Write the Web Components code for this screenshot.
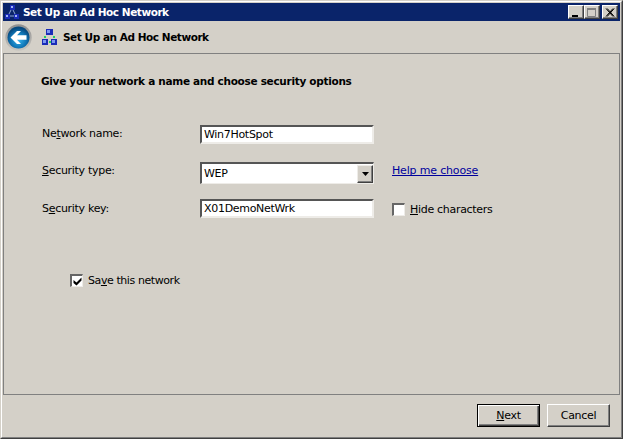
<!DOCTYPE html>
<html>
<head>
<meta charset="utf-8">
<title>Set Up an Ad Hoc Network</title>
<style>
  html,body{margin:0;padding:0;background:#d4d0c8;}
  body{width:623px;height:439px;overflow:hidden;font-family:"DejaVu Sans",sans-serif;font-size:11px;color:#000;}
  u{text-decoration-skip-ink:none;}
</style>
</head>
<body>
<template id="net-icon">
  <svg width="16" height="16" viewBox="0 0 16 16" style="display:block">
    <rect x="5" y="0" width="7" height="6" fill="#1a2cb8"/><rect x="6" y="1" width="3" height="3" fill="#7d97f0"/>
    <rect x="1" y="10" width="6" height="6" fill="#1a2cb8"/><rect x="2" y="11" width="3" height="3" fill="#7d97f0"/>
    <rect x="10" y="10" width="6" height="6" fill="#1a2cb8"/><rect x="11" y="11" width="3" height="3" fill="#7d97f0"/>
    <rect x="3" y="7" width="2" height="2" fill="#20d060"/><rect x="12" y="7" width="2" height="2" fill="#20d060"/>
    <rect x="8" y="12" width="2" height="2" fill="#20d060"/>
  </svg>
</template>

<a-window>
  <a-titlebar slot="title">Set Up an Ad Hoc Network</a-titlebar>
  <a-header slot="head">Set Up an Ad Hoc Network</a-header>
  <a-panel heading="Give your network a name and choose security options">
    <a-label><span>Ne<u>t</u>work name:</span></a-label>
    <a-input value="Win7HotSpot"></a-input>
    <span></span>

    <a-label><span><u>S</u>ecurity type:</span></a-label>
    <a-select value="WEP"></a-select>
    <a-link>Help me choose</a-link>

    <a-label low><span>S<u>e</u>curity key:</span></a-label>
    <a-input value="X01DemoNetWrk"></a-input>
    <a-check><span><u>H</u>ide characters</span></a-check>

    <a-check slot="save" checked><span>Sa<u>v</u>e this network</span></a-check>
  </a-panel>
  <a-footer slot="foot">
    <a-button default><span><u>N</u>ext</span></a-button>
    <a-button>Cancel</a-button>
  </a-footer>
</a-window>

<script>
  // window frame, everything else goes in its slots
  class aWindow extends HTMLElement {
    constructor() {
      super();
      let shadowRoot = this.attachShadow({mode: 'open'});
      shadowRoot.innerHTML = `
      <style>
        :host{
          display:flex;
          flex-direction:column;
          box-sizing:border-box;
          width:623px;
          height:439px;
          background:#d4d0c8;
          border-top:1px solid #d4d0c8;
          border-left:1px solid #d4d0c8;
          border-right:1px solid #404040;
          border-bottom:1px solid #404040;
          letter-spacing:-0.3px;
        }
        .inner{
          flex:1;
          display:flex;
          flex-direction:column;
          min-height:0;
          border-top:1px solid #fff;
          border-left:1px solid #fff;
          border-right:1px solid #808080;
          border-bottom:1px solid #808080;
          padding:1px;
        }
      </style>
      <div class="inner">
        <slot name="title"></slot>
        <slot name="head"></slot>
        <slot></slot>
        <slot name="foot"></slot>
      </div>`;
    }
  }

  class aTitlebar extends HTMLElement {
    constructor() {
      super();
      let shadowRoot = this.attachShadow({mode: 'open'});
      shadowRoot.innerHTML = `
      <style>
        :host{
          display:flex;
          align-items:center;
          height:18px;
          background:#0a246a;
          color:#fff;
          font:bold 10.5px "DejaVu Sans",sans-serif;
          letter-spacing:-0.45px;
          padding:0 2px 0 2px;
        }
        svg{margin-right:4px;flex:none;}
        .text{flex:1;white-space:nowrap;}
        .btns{display:flex;align-items:center;}
        .b{
          box-sizing:border-box;
          width:16px;
          height:14px;
          background:#d4d0c8;
          border-top:1px solid #fff;
          border-left:1px solid #fff;
          border-right:1px solid #404040;
          border-bottom:1px solid #404040;
          box-shadow:inset -1px -1px 0 #808080;
          display:flex;
          align-items:center;
          justify-content:center;
        }
        .b svg{margin:0;display:block;}
      </style>
      <svg width="14" height="14" viewBox="0 0 14 14">
        <path d="M7 3 L3 11 M7 3 L11 11 M3 11 L11 11" stroke="#8fa6d8" fill="none"/>
        <rect x="5" y="0" width="5" height="5" fill="#1a2cb8"/><rect x="6" y="1" width="2" height="2" fill="#9fb4f4"/>
        <rect x="0" y="9" width="5" height="5" fill="#1a2cb8"/><rect x="1" y="10" width="2" height="2" fill="#9fb4f4"/>
        <rect x="9" y="9" width="5" height="5" fill="#1a2cb8"/><rect x="10" y="10" width="2" height="2" fill="#9fb4f4"/>
      </svg>
      <span class="text"><slot></slot></span>
      <div class="btns">
        <div class="b"><svg width="10" height="9" viewBox="0 0 10 9"><rect x="1" y="7" width="6" height="2" fill="#000"/></svg></div>
        <div class="b"><svg width="10" height="9" viewBox="0 0 10 9"><path d="M0.5 1.5H8.5V8.5H0.5Z" fill="none" stroke="#808080"/><rect x="0" y="0" width="9" height="2" fill="#808080"/></svg></div>
        <div class="b" style="margin-left:2px"><svg width="10" height="9" viewBox="0 0 10 9"><path d="M1 0.5L8 8.5M2.2 0.5L9.2 8.5M8 0.5L1 8.5M9.2 0.5L2.2 8.5" stroke="#000" fill="none"/></svg></div>
      </div>`;
    }
  }

  class aHeader extends HTMLElement {
    constructor() {
      super();
      let shadowRoot = this.attachShadow({mode: 'open'});
      shadowRoot.innerHTML = `
      <style>
        :host{
          display:flex;
          align-items:center;
          height:32px;
          padding-left:2px;
          font:bold 10.5px "DejaVu Sans",sans-serif;
          letter-spacing:-0.45px;
        }
        .ico{margin:0 6px 0 9px;}
      </style>
      <svg width="27" height="27" viewBox="0 0 27 27">
        <defs>
          <radialGradient id="g" cx="50%" cy="62%" r="55%">
            <stop offset="0" stop-color="#35b4ee"/>
            <stop offset="0.65" stop-color="#0f74b4"/>
            <stop offset="1" stop-color="#064a80"/>
          </radialGradient>
          <linearGradient id="r" x1="0" y1="0" x2="0" y2="1">
            <stop offset="0" stop-color="#8f8f8f"/>
            <stop offset="1" stop-color="#c8c6c0"/>
          </linearGradient>
        </defs>
        <circle cx="13.5" cy="13.5" r="13.2" fill="url(#r)"/>
        <circle cx="13.5" cy="13.5" r="11" fill="url(#g)"/>
        <path d="M5.5 13.5L12 7H16L12 11.2H21.5V15.8H12L16 20H12Z" fill="#fff"/>
      </svg>
      <span class="ico"></span>
      <span><slot></slot></span>`;
      shadowRoot.querySelector('.ico').appendChild(document.getElementById('net-icon').content.cloneNode(true));
    }
  }

  // the grey sunken box with the form in it
  class aPanel extends HTMLElement {
    constructor() {
      super();
      let shadowRoot = this.attachShadow({mode: 'open'});
      shadowRoot.innerHTML = `
      <style>
        :host{
          display:block;
          box-sizing:border-box;
          height:342px;
          border:1px solid #808080;
          flex:none;
          padding:21px 0 0 37px;
        }
        h1{
          margin:0;
          font:bold 10.5px "DejaVu Sans",sans-serif;
          letter-spacing:-0.3px;
          height:13px;
          line-height:13px;
        }
        .form{
          display:grid;
          grid-template-columns:159px 174px auto;
          grid-template-rows:22px 22px 19px;
          row-gap:15px;
          margin-top:37px;
          align-items:start;
        }
        .save{margin:56px 0 0 29px;letter-spacing:-0.42px;}
      </style>
      <h1></h1>
      <div class="form"><slot></slot></div>
      <div class="save"><slot name="save"></slot></div>`;
      shadowRoot.querySelector('h1').textContent = this.getAttribute('heading');
    }
  }

  class aLabel extends HTMLElement {
    constructor() {
      super();
      let shadowRoot = this.attachShadow({mode: 'open'});
      shadowRoot.innerHTML = `
      <style>
        :host{display:block;padding-left:1px;font:11px/17px "DejaVu Sans",sans-serif;}
        :host([low]){padding-top:1px;}
      </style>
      <slot></slot>`;
    }
  }

  class aInput extends HTMLElement {
    constructor() {
      super();
      let shadowRoot = this.attachShadow({mode: 'open'});
      shadowRoot.innerHTML = `
      <style>
        :host{
          display:block;
          box-sizing:border-box;
          height:19px;
          background:#fff;
          border-top:2px solid #555;
          border-left:2px solid #555;
          border-right:2px solid #eeece8;
          border-bottom:2px solid #eeece8;
          font:11px/15px "DejaVu Sans",sans-serif;
          padding-left:2px;
          white-space:nowrap;
        }
      </style>
      <span></span>`;
      shadowRoot.querySelector('span').textContent = this.getAttribute('value');
    }
  }

  class aSelect extends HTMLElement {
    constructor() {
      super();
      let shadowRoot = this.attachShadow({mode: 'open'});
      shadowRoot.innerHTML = `
      <style>
        :host{
          display:flex;
          box-sizing:border-box;
          height:22px;
          background:#fff;
          border-top:2px solid #555;
          border-left:2px solid #555;
          border-right:1px solid #eeece8;
          border-bottom:1px solid #eeece8;
          font:11px "DejaVu Sans",sans-serif;
          align-items:center;
        }
        .v{flex:1;padding-left:2px;}
        .arrow{
          box-sizing:border-box;
          width:16px;
          height:18px;
          background:#d4d0c8;
          border-top:1px solid #eeece8;
          border-left:1px solid #eeece8;
          border-right:1px solid #404040;
          border-bottom:1px solid #404040;
          box-shadow:inset -1px -1px 0 #808080;
          display:flex;
          align-items:center;
          justify-content:center;
        }
      </style>
      <span class="v"></span>
      <div class="arrow"><svg width="7" height="4" viewBox="0 0 7 4" style="display:block"><path d="M0 0H7L3.5 4Z" fill="#000"/></svg></div>`;
      shadowRoot.querySelector('.v').textContent = this.getAttribute('value');
    }
  }

  class aLink extends HTMLElement {
    constructor() {
      super();
      let shadowRoot = this.attachShadow({mode: 'open'});
      shadowRoot.innerHTML = `
      <style>
        :host{display:block;margin-left:18px;font:11px/17px "DejaVu Sans",sans-serif;letter-spacing:-0.17px;}
        a{color:#00009c;text-decoration:underline;text-decoration-skip-ink:none;}
      </style>
      <a href="#"><slot></slot></a>`;
    }
  }

  class aCheck extends HTMLElement {
    constructor() {
      super();
      let shadowRoot = this.attachShadow({mode: 'open'});
      const tick = this.hasAttribute('checked')
        ? '<svg width="9" height="9" viewBox="0 0 9 9" style="display:block"><path d="M0.5 3L3.5 5.5L8.5 0.5V3.5L3.5 8.5L0.5 6Z" fill="#000"/></svg>' : '';
      shadowRoot.innerHTML = `
      <style>
        :host{
          display:flex;
          align-items:center;
          margin:4px 0 0 18px;
          gap:5px;
          font:11px "DejaVu Sans",sans-serif;
        }
        :host([slot="save"]){margin:0;}
        .box{
          box-sizing:border-box;
          width:13px;
          height:13px;
          background:#fff;
          border-top:2px solid #666;
          border-left:2px solid #666;
          border-right:1px solid #eeece8;
          border-bottom:1px solid #eeece8;
          display:flex;
          align-items:center;
          justify-content:center;
          flex:none;
        }
      </style>
      <div class="box">${tick}</div>
      <span><slot></slot></span>`;
    }
  }

  class aFooter extends HTMLElement {
    constructor() {
      super();
      let shadowRoot = this.attachShadow({mode: 'open'});
      shadowRoot.innerHTML = `
      <style>
        :host{
          display:flex;
          justify-content:flex-end;
          gap:7px;
          padding:9px 10px 0 0;
        }
      </style>
      <slot></slot>`;
    }
  }

  class aButton extends HTMLElement {
    constructor() {
      super();
      let shadowRoot = this.attachShadow({mode: 'open'});
      shadowRoot.innerHTML = `
      <style>
        :host{
          display:flex;
          box-sizing:border-box;
          width:63px;
          height:23px;
          align-items:center;
          justify-content:center;
          background:#d4d0c8;
          border-top:1px solid #fff;
          border-left:1px solid #fff;
          border-right:1px solid #404040;
          border-bottom:1px solid #404040;
          box-shadow:inset -1px -1px 0 #808080;
          font:11px "DejaVu Sans",sans-serif;
        }
        :host([default]){
          border:1px solid #000;
          box-shadow:inset 1px 1px 0 #fff, inset -1px -1px 0 #404040, inset -2px -2px 0 #808080;
        }
      </style>
      <slot></slot>`;
    }
  }

  customElements.define('a-window',aWindow);
  customElements.define('a-titlebar',aTitlebar);
  customElements.define('a-header',aHeader);
  customElements.define('a-panel',aPanel);
  customElements.define('a-label',aLabel);
  customElements.define('a-input',aInput);
  customElements.define('a-select',aSelect);
  customElements.define('a-link',aLink);
  customElements.define('a-check',aCheck);
  customElements.define('a-footer',aFooter);
  customElements.define('a-button',aButton);
</script>
</body>
</html>
